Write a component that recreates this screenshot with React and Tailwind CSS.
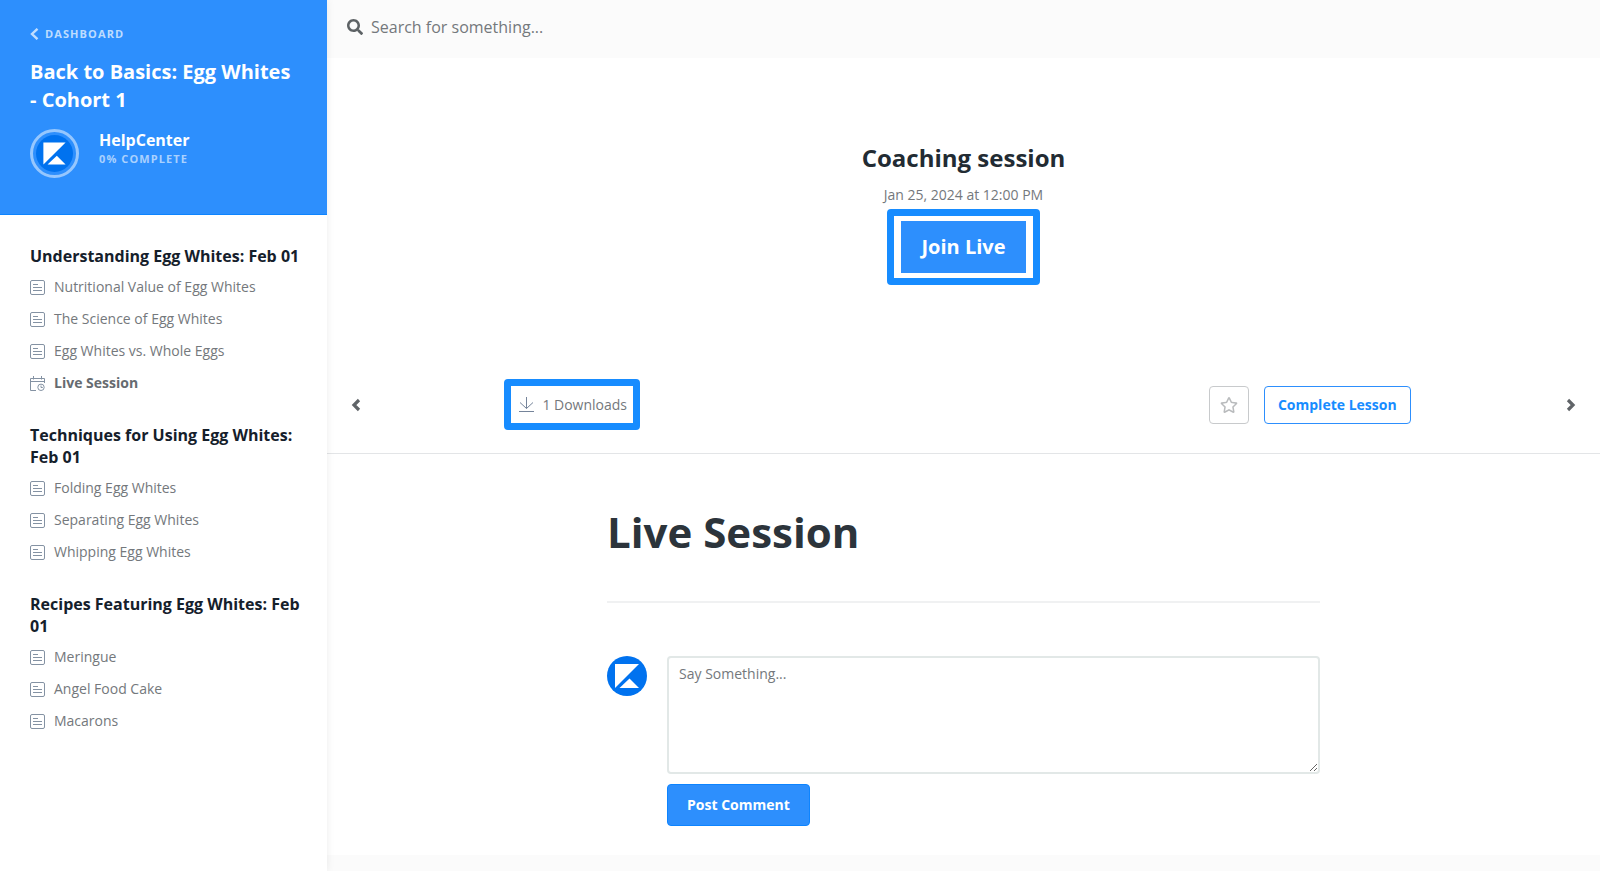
import { useState } from "react"
import { FaSearch, FaRegStar } from "react-icons/fa"

const sections = [
  {
    title: "Understanding Egg Whites: Feb 01",
    lessons: [
      { label: "Nutritional Value of Egg Whites" },
      { label: "The Science of Egg Whites" },
      { label: "Egg Whites vs. Whole Eggs" },
      { label: "Live Session", live: true },
    ],
  },
  {
    title: "Techniques for Using Egg Whites: Feb 01",
    lessons: [
      { label: "Folding Egg Whites" },
      { label: "Separating Egg Whites" },
      { label: "Whipping Egg Whites" },
    ],
  },
  {
    title: "Recipes Featuring Egg Whites: Feb 01",
    lessons: [
      { label: "Meringue" },
      { label: "Angel Food Cake" },
      { label: "Macarons" },
    ],
  },
]

const BrandMark = ({ className }) => (
  <svg viewBox="0 0 40 40" className={className} aria-hidden="true">
    <circle cx="20" cy="20" r="20" fill="#0072ef" />
    <path d="M8 8h24L8 32z" fill="#fff" />
    <path d="M12.5 32L22.5 22.5L32 32z" fill="#fff" />
  </svg>
)

const TextIcon = () => (
  <svg width="15" height="15" viewBox="0 0 15 15" fill="none" stroke="#8492a3" className="shrink-0" aria-hidden="true">
    <rect x="0.5" y="0.5" width="14" height="14" rx="1.5" />
    <path d="M3 4.5h5M3 7.5h9M3 10.5h9" />
  </svg>
)

const CalendarIcon = () => (
  <svg width="15" height="15" viewBox="0 0 15 15" fill="none" stroke="#8492a3" className="shrink-0" aria-hidden="true">
    <path d="M6 14.5H0.5V2.5H14.5V7M0.5 5.5H14.5M3.5 0V3.5M11.5 0V3.5" />
    <circle cx="11" cy="11.3" r="3.2" />
    <path d="M11 9.5V11.5H12.8" />
  </svg>
)

const DownloadIcon = () => (
  <svg width="15" height="15" viewBox="0 0 15 15" fill="none" stroke="#75849a" aria-hidden="true">
    <path d="M7.5 0V11.5M1 5.5L7.5 11.5L14 5.5M0 14.5H15" />
  </svg>
)

const Chevron = ({ className }) => (
  <svg width="10" height="14" viewBox="0 0 10 14" fill="none" stroke="currentColor" strokeWidth="3.2" className={className} aria-hidden="true">
    <path d="M8 2L3 7L8 12" />
  </svg>
)

const Sidebar = () => (
  <aside className="relative z-10 w-[327px] shrink-0 bg-white shadow-[0_0_8px_rgba(0,0,0,0.08)]">
    <div className="bg-[#2d8ffd] border-b border-[#0d84ff] px-[30px] pt-[26px] pb-9 text-white">
      <a href="#dashboard" className="flex items-center gap-[6px] text-[11px] leading-4 font-bold tracking-widest text-white/70">
        <svg width="9" height="12" viewBox="0 0 9 12" fill="none" stroke="currentColor" strokeWidth="2.4" aria-hidden="true">
          <path d="M7.5 0.8L2 6L7.5 11.2" />
        </svg>
        DASHBOARD
      </a>
      <h1 className="mt-4 text-xl leading-7 font-bold">Back to Basics: Egg Whites - Cohort 1</h1>
      <div className="mt-[15px] flex items-start gap-5">
        <div className="size-[49px] shrink-0 rounded-full border-3 border-white/50 p-[3px]">
          <BrandMark className="size-full" />
        </div>
        <div>
          <p className="text-base leading-[22px] font-bold">HelpCenter</p>
          <p className="text-[11px] leading-4 font-bold tracking-widest text-white/60">0% COMPLETE</p>
        </div>
      </div>
    </div>

    <nav className="flex flex-col gap-[25px] pt-[30px] pr-5 pb-8 pl-[30px]">
      {sections.map(section => (
        <section key={section.title}>
          <h2 className="mb-1 text-base leading-[22px] font-bold text-[#15202b]">{section.title}</h2>
          <ul>
            {section.lessons.map(lesson => (
              <li key={lesson.label}>
                <a
                  href="#lesson"
                  className={`flex h-8 items-center gap-[9px] text-sm ${lesson.live ? "font-bold text-[#666b70]" : "text-[#74787c]"}`}
                >
                  {lesson.live ? <CalendarIcon /> : <TextIcon />}
                  {lesson.label}
                </a>
              </li>
            ))}
          </ul>
        </section>
      ))}
    </nav>
  </aside>
)

const App = () => {
  const [comment, setComment] = useState("")

  return (
    <div className="flex min-h-screen bg-[#fbfbfb] font-['Open_Sans',sans-serif]">
      <Sidebar />

      <div className="min-w-0 flex-1">
        <label className="flex h-[58px] items-center gap-2 px-5 pb-1">
          <FaSearch size={16} className="shrink-0 text-[#5d6265]" />
          <input
            type="search"
            aria-label="Search"
            placeholder="Search for something..."
            className="flex-1 bg-transparent text-base text-[#666b70] outline-none placeholder:text-[#74787c]"
          />
        </label>

        <main className="bg-white pb-[29px]">
          <section className="flex flex-col items-center pt-[84px]">
            <h2 className="text-2xl leading-8 font-bold text-[#222b33]">Coaching session</h2>
            <p className="mt-[11px] text-sm leading-5 text-[#74787c]">Jan 25, 2024 at 12:00 PM</p>
            <div className="mt-1 rounded-sm border-7 border-[#178cff] px-[7px] py-[5px]">
              <button type="button" className="bg-[#2d8ffd] px-5 py-3 text-xl leading-7 font-bold text-white">
                Join Live
              </button>
            </div>
          </section>

          <div className="mt-[94px] flex items-center justify-between border-b border-[#e3e5e7] px-6 pb-[23px]">
            <button type="button" aria-label="Previous lesson" className="text-[#606468]">
              <Chevron />
            </button>
            <div className="flex w-[73%] items-center justify-between">
              <div className="-ml-3 rounded-sm border-7 border-[#178cff] py-2 pr-[6px] pl-2">
                <button type="button" className="flex items-center gap-2 text-sm leading-[21px] text-[#74787c]">
                  <DownloadIcon />
                  1 Downloads
                </button>
              </div>
              <div className="flex gap-[15px]">
                <button type="button" aria-label="Favorite" className="flex h-[38px] w-10 items-center justify-center rounded-sm border border-[#c8cacc] text-[#b9bbbd]">
                  <FaRegStar size={18} />
                </button>
                <button type="button" className="h-[38px] rounded-sm border border-[#2d8ffd] px-[13px] text-sm font-bold text-[#178cff]">
                  Complete Lesson
                </button>
              </div>
            </div>
            <button type="button" aria-label="Next lesson" className="text-[#606468]">
              <Chevron className="rotate-180" />
            </button>
          </div>

          <article className="mx-auto w-[56%] pt-12">
            <h1 className="text-[42px] leading-[60px] font-bold text-[#2c343b]">Live Session</h1>
            <hr className="mt-[39px] border-t-2 border-[#f0f1f2]" />
            <form className="mt-[53px] flex items-start gap-5" onSubmit={e => e.preventDefault()}>
              <BrandMark className="size-10 shrink-0" />
              <div className="flex-1">
                <textarea
                  aria-label="Comment"
                  placeholder="Say Something..."
                  value={comment}
                  onChange={e => setComment(e.target.value)}
                  className="block h-[118px] w-full resize rounded-sm border-2 border-[#e2e8e7] px-[10px] py-[6px] text-sm leading-5 text-[#666b70] outline-none placeholder:text-[#74787c]"
                />
                <button type="submit" className="mt-[10px] rounded-sm border border-[#0d84ff] bg-[#2d8ffd] px-[19px] py-[10px] text-sm leading-5 font-bold text-white">
                  Post Comment
                </button>
              </div>
            </form>
          </article>
        </main>
      </div>
    </div>
  )
}

export default App
